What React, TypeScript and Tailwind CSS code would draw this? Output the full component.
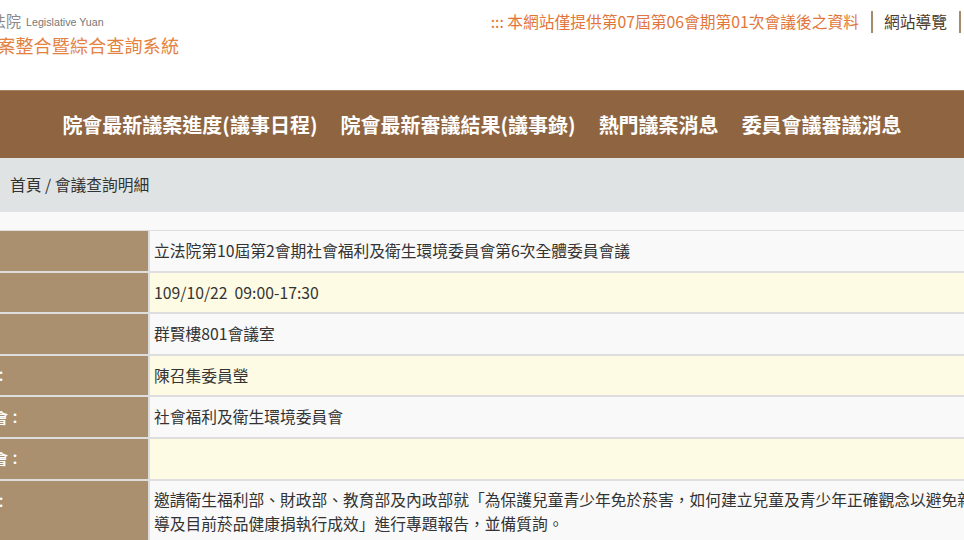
const font = { fontFamily: '"Noto Sans CJK TC", "Noto Sans", sans-serif' }

const rows = [
  { label: '名　稱：', value: '立法院第10屆第2會期社會福利及衛生環境委員會第6次全體委員會議' },
  { label: '時　間：', value: '109/10/22\u00a0\u00a009:00-17:30' },
  { label: '地　點：', value: '群賢樓801會議室' },
  { label: '召集委員：', value: '陳召集委員瑩' },
  { label: '主辦委員會：', value: '社會福利及衛生環境委員會' },
  { label: '聯席委員會：', value: '' },
]

const navItems = ['院會最新議案進度(議事日程)', '院會最新審議結果(議事錄)', '熱門議案消息', '委員會議審議消息']

export default function App() {
  return (
    <div className="w-[964px] h-[540px] overflow-hidden bg-[#f9f9f9] text-[#333]" style={font}>
      {/* Header */}
      <div className="h-[90px] bg-white flex justify-between">
        <div className="ml-[-21px] pt-[11px]">
          <div className="ml-[-3px] flex items-end h-[20px]">
            <span className="text-[15px] leading-[20px] text-[#8a8a8a]">立法院</span>
            <span className="ml-[5px] text-[10.7px] leading-[17px] text-[#777]" style={{ fontFamily: '"Liberation Sans", Arial, sans-serif' }}>
              Legislative Yuan
            </span>
          </div>
          <div className="mt-[2px] text-[18px] leading-[24px] text-[#e5823f] tracking-[0.2px]">議案整合暨綜合查詢系統</div>
        </div>
        <div className="flex items-start pt-[11px] mr-[-2px]">
          <span className="text-[15.75px] leading-[22px] text-[#e2763a]">::: 本網站僅提供第07屆第06會期第01次會議後之資料</span>
          <span className="ml-[12px] w-[2px] h-[22px] bg-[#a58a6d]" />
          <span className="pl-[11px] pr-[12px] text-[15.75px] leading-[22px] text-[#4d3b2a]">網站導覽</span>
          <span className="w-[2px] h-[22px] bg-[#a58a6d]" />
          <span className="w-[5px]" />
        </div>
      </div>

      {/* Main nav */}
      <div className="h-[68px] bg-[#8f6541] border-t border-[#a8835e] flex items-center justify-center gap-[23px]">
        {navItems.map((item) => (
          <span key={item} className="text-white font-bold text-[20px] leading-[28px] whitespace-nowrap">
            {item}
          </span>
        ))}
      </div>

      {/* Breadcrumb */}
      <div className="h-[54px] bg-[#dfe3e4] flex items-center px-[10px] text-[15.75px] text-[#333]">首頁 / 會議查詢明細</div>

      {/* Detail table */}
      <div className="pt-[18px]">
        <div className="ml-[-90px] w-[1300px] grid grid-cols-[238px_1fr] gap-[2px] bg-[#dedede] pt-[1px]">
          {rows.map((r, i) => (
            <div key={r.label} className="contents">
              <div className="h-[39.6px] bg-[#ab9070] pl-[28px] flex items-center text-white font-bold text-[14px]">{r.label}</div>
              <div className={`h-[39.6px] ${i % 2 === 0 ? 'bg-[#f9f9f9]' : 'bg-[#fdfbe4]'} px-[4px] flex items-center text-[15.75px] whitespace-nowrap`}>
                {r.value}
              </div>
            </div>
          ))}
          <div className="h-[70px] bg-[#ab9070] pl-[28px] pt-[10px] text-white font-bold text-[14px]">會議事由：</div>
          <div className="h-[70px] bg-[#f9f9f9] px-[4px] pt-[7px] text-[15.75px] leading-[24px] whitespace-nowrap">
            <div>邀請衛生福利部、財政部、教育部及內政部就「為保護兒童青少年免於菸害，如何建立兒童及青少年正確觀念以避免新興菸品誤</div>
            <div>導及目前菸品健康捐執行成效」進行專題報告，並備質詢。</div>
          </div>
        </div>
      </div>
    </div>
  )
}
